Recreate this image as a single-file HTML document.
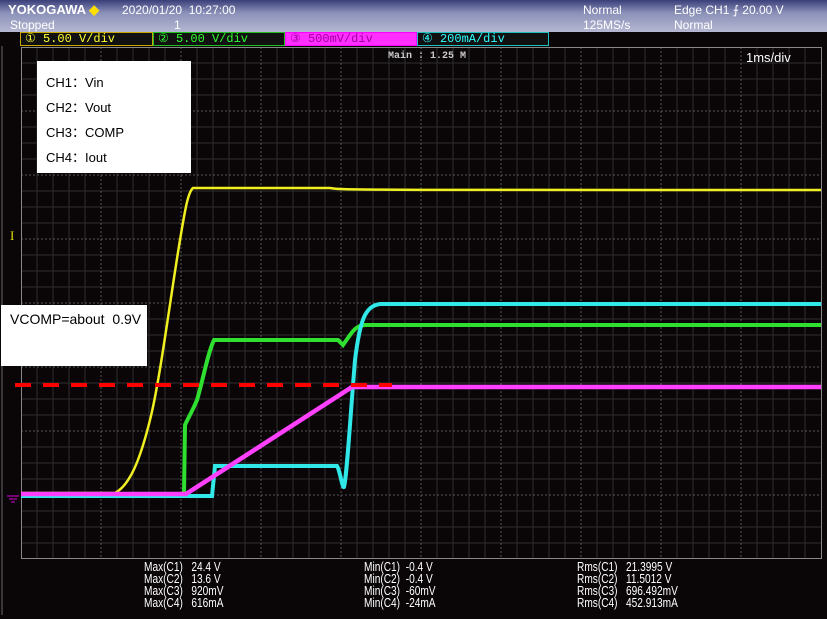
<!DOCTYPE html>
<html><head><meta charset="utf-8">
<style>
html,body{margin:0;padding:0;background:#0a0608;}
body{width:827px;height:619px;position:relative;overflow:hidden;font-family:"Liberation Sans",sans-serif;}
.top{position:absolute;left:0;top:0;width:827px;height:32px;background:linear-gradient(#3a3f7a,#8b90b8 40%,#b5b8d2);}
.t{position:absolute;color:#fff;font-size:12px;line-height:12px;white-space:nowrap;}
.ch{position:absolute;top:32px;height:14px;box-sizing:border-box;border:1px solid;font-size:12px;line-height:12px;font-family:"Liberation Mono",monospace;white-space:nowrap;padding-left:4px;}
.box{position:absolute;background:#fff;color:#000;font-family:"Liberation Sans","Noto Sans CJK SC",sans-serif;font-size:13px;}
.m{position:absolute;color:#fff;font-family:"Liberation Sans",sans-serif;font-size:13px;line-height:12px;white-space:pre;transform:scaleX(0.78);transform-origin:left;}
</style></head><body>
<div class="top"></div>
<div class="t" style="left:8px;top:4px;font-weight:bold;font-size:13px">YOKOGAWA <span style="color:#ffe000">◆</span></div>
<div class="t" style="left:122px;top:4px">2020/01/20&nbsp; 10:27:00</div>
<div class="t" style="left:10px;top:19px">Stopped</div>
<div class="t" style="left:174px;top:19px">1</div>
<div class="t" style="left:583px;top:4px">Normal</div>
<div class="t" style="left:583px;top:19px">125MS/s</div>
<div class="t" style="left:674px;top:4px">Edge CH1 ⨍ 20.00 V</div>
<div class="t" style="left:674px;top:19px">Normal</div>
<div class="ch" style="left:20px;width:133px;border-color:#c8a800;color:#ffff30;background:#111">① 5.00 V/div</div>
<div class="ch" style="left:153px;width:132px;border-color:#20c020;color:#30ff30;background:#111">② 5.00 V/div</div>
<div class="ch" style="left:285px;width:132px;border-color:#ff00ff;color:#a000a0;background:#ff30ff">③ 500mV/div</div>
<div class="ch" style="left:417px;width:132px;border-color:#20c0c0;color:#30ffff;background:#111">④ 200mA/div</div>
<svg style="position:absolute;left:0;top:0" width="827" height="619">
<line x1="2" y1="46" x2="2" y2="615" stroke="#666" stroke-width="1"/>
<g stroke="#2e2e2e" stroke-width="1">
<path d="M37 47V559M53 47V559M69 47V559M85 47V559M117 47V559M133 47V559M149 47V559M165 47V559M197 47V559M213 47V559M229 47V559M245 47V559M277 47V559M293 47V559M309 47V559M325 47V559M357 47V559M373 47V559M389 47V559M405 47V559M437 47V559M453 47V559M469 47V559M485 47V559M517 47V559M533 47V559M549 47V559M565 47V559M597 47V559M613 47V559M629 47V559M645 47V559M677 47V559M693 47V559M709 47V559M725 47V559M757 47V559M773 47V559M789 47V559M805 47V559"/>
<path d="M21 63H821M21 79H821M21 95H821M21 127H821M21 143H821M21 159H821M21 191H821M21 207H821M21 223H821M21 255H821M21 271H821M21 287H821M21 319H821M21 335H821M21 351H821M21 383H821M21 399H821M21 415H821M21 447H821M21 463H821M21 479H821M21 511H821M21 527H821M21 543H821"/>
</g>
<g stroke="#555" stroke-width="1" stroke-dasharray="2,2">
<path d="M101 47V559M181 47V559M261 47V559M341 47V559M421 47V559M501 47V559M581 47V559M661 47V559M741 47V559"/>
<path d="M21 111H821M21 175H821M21 239H821M21 303H821M21 367H821M21 431H821M21 495H821"/>
</g>
<rect x="21.5" y="47.5" width="800" height="511" fill="none" stroke="#888"/>
<text x="10" y="240" fill="#e0e000" font-size="13" font-family="Liberation Serif">I</text>
<path d="M7 496H19M9 499H17M11 502H15" stroke="#b000b0" stroke-width="1.2"/>
<path d="M21 493H115C130 485 140 460 150 420C160 380 170 300 180 240C185 210 188 192 193 188H330C340 190 345 190 821 190" stroke="#f0f020" stroke-width="2.5" fill="none"/>
<path d="M21 494H184L185 425C188 418 192 412 197 400C203 380 208 352 214 340H338L343 345L350 335C355 328 358 326 365 325H821" stroke="#30e030" stroke-width="4" fill="none"/>
<path d="M21 496H212L215 466H337C340 470 342 488 344 487C347 475 350 420 355 360C360 320 365 306 380 304H821" stroke="#30e8e8" stroke-width="4" fill="none"/>
<path d="M21 494H186L352 387H821" stroke="#ff40ff" stroke-width="4.5" fill="none"/>
<line x1="15" y1="385" x2="392" y2="385" stroke="#ff0000" stroke-width="4" stroke-dasharray="16,12"/>
<text x="388" y="58" fill="#ccc" font-size="10" font-family="Liberation Mono" font-weight="bold">Main : 1.25 M</text>
<text x="746" y="62" fill="#fff" font-size="13">1ms/div</text>
</svg>
<div class="box" style="left:37px;top:61px;width:154px;height:112px">
<div style="position:absolute;left:9px;top:9px;line-height:25px">CH1：Vin<br>CH2：Vout<br>CH3：COMP<br>CH4：Iout</div></div>
<div class="box" style="left:1px;top:305px;width:146px;height:61px;font-size:14px"><div style="position:absolute;left:9px;top:6px">VCOMP=about&nbsp; 0.9V</div></div>
<div class="m" style="left:144px;top:561px">Max(C1)   24.4 V
Max(C2)   13.6 V
Max(C3)   920mV
Max(C4)   616mA</div>
<div class="m" style="left:364px;top:561px">Min(C1)  -0.4 V
Min(C2)  -0.4 V
Min(C3)  -60mV
Min(C4)  -24mA</div>
<div class="m" style="left:577px;top:561px">Rms(C1)   21.3995 V
Rms(C2)   11.5012 V
Rms(C3)   696.492mV
Rms(C4)   452.913mA</div>
</body></html>
